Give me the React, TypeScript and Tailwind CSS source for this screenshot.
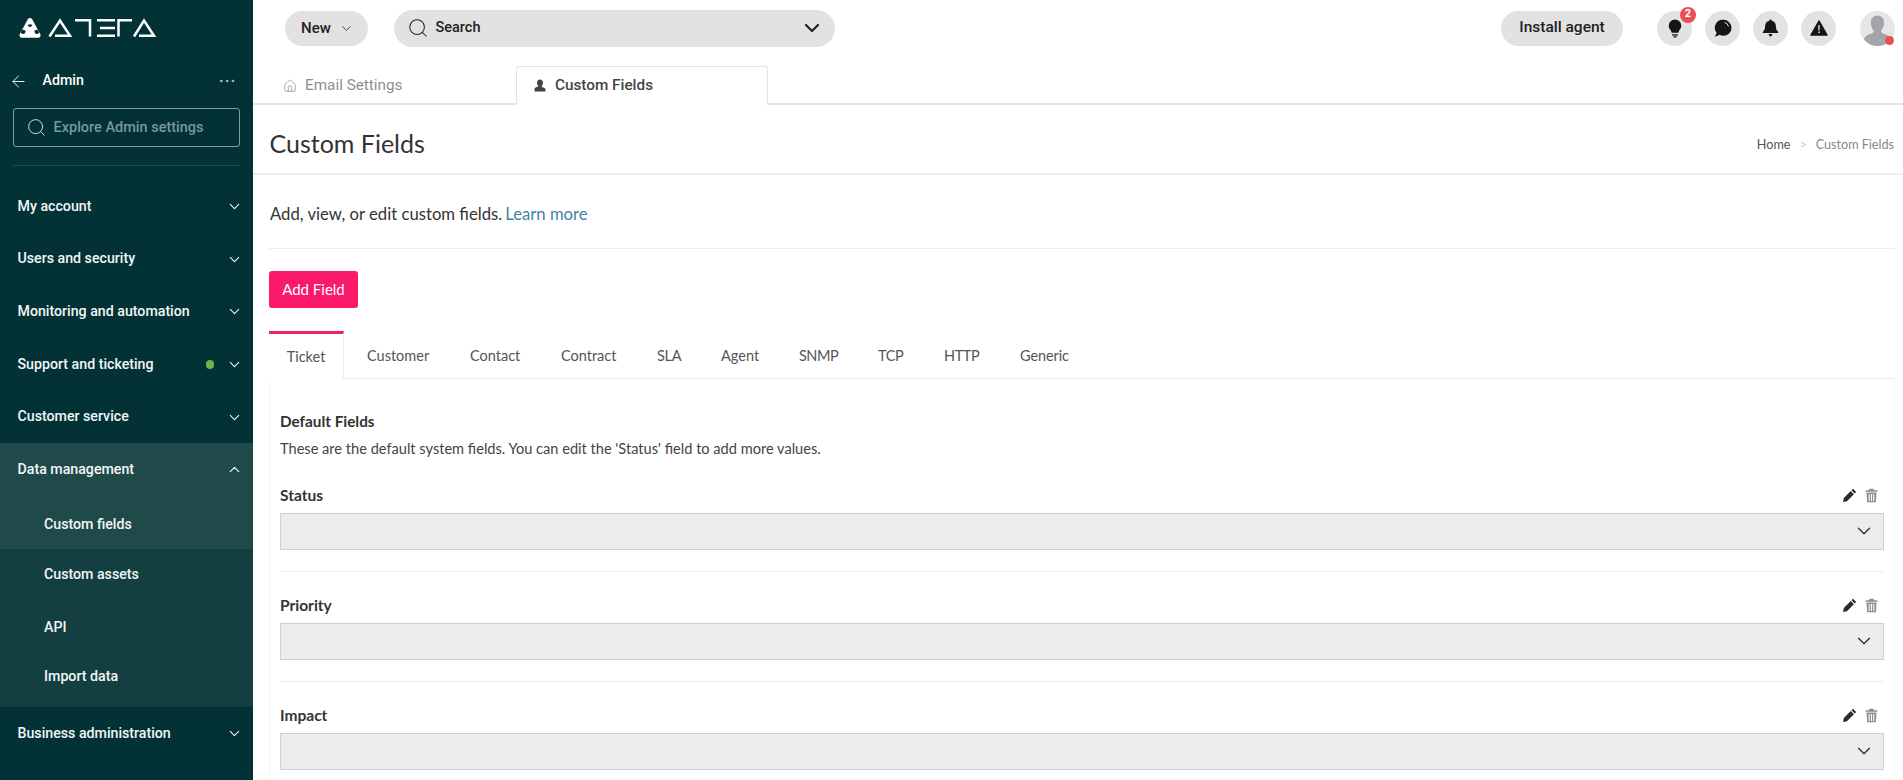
import { ArrowLeft, ChevronDown, ChevronUp, Ellipsis, Home, Search } from "lucide-react";

const sans = "font-['Roboto',sans-serif]";
const body = "font-['Lato','Noto_Sans',sans-serif]";

function Logo() {
  return (
    <svg width="140" height="22" viewBox="0 0 140 22" fill="none" className="shrink-0">
      {/* mark */}
      <path fill="#fff" stroke="#fff" strokeWidth="5" strokeLinejoin="round" d="M12 3.500 20 18.200H4z" />
      <g fill="#033236">
        <path d="M9.800 8c.3 1.200 1.100 2 2.200 2s1.900-.8 2.200-2c-.7-.5-1.400-.8-2.200-.8s-1.500.3-2.200.8z" />
        <path d="M3.800 13.200c1.300-.7 2.900-.3 3.800.7-.1 1.300-.6 2.400-1.700 3.100-1.100 0-2.300-.4-3.200-1.100z" />
        <path d="M20.200 13.200c-1.300-.7-2.900-.3-3.800.7.1 1.300.6 2.400 1.700 3.100 1.100 0 2.300-.4 3.200-1.100z" />
      </g>
      {/* wordmark */}
      <g stroke="#fff" strokeWidth="2.500" strokeLinejoin="miter">
        <path d="M31.500 19.500 42 3.500 52 18.700H37" />
        <path d="M57 3.200h15v16.300" />
        <path d="M79 3.200h18M82 11h15M79 18.700h18" />
        <path d="M114 3.200h-13.500v16.300" />
        <path d="M116 19.500 126 3.500 136 18.700h-15" />
      </g>
    </svg>
  );
}

const navTop = [
  "My account",
  "Users and security",
  "Monitoring and automation",
  "Support and ticketing",
  "Customer service",
];

function NavRow({ label, dot, open }: { label: string; dot?: boolean; open?: boolean }) {
  return (
    <div className="flex h-[52.700px] items-center pl-[17.500px] pr-[10px] text-[14.200px] font-medium text-[#f2f6f6]">
      <span className="flex-1 whitespace-nowrap">{label}</span>
      {dot && <span className="mr-[12px] h-[8.500px] w-[8.500px] rounded-full bg-[#6cb33f]"></span>}
      {open ? <ChevronUp size={17} strokeWidth={1.750} /> : <ChevronDown size={17} strokeWidth={1.500} />}
    </div>
  );
}

function Sidebar() {
  return (
    <aside className={`${sans} flex h-full w-[253px] shrink-0 flex-col bg-[#033236]`}>
      <div className="pl-[18px] pt-[17px]">
        <Logo />
      </div>
      <div className="mt-[30px] flex h-[24px] items-center pl-[9px] pr-[16px] text-white">
        <ArrowLeft size={19} strokeWidth={1.200} />
        <span className="ml-[14.500px] flex-1 text-[14.200px] font-medium">Admin</span>
        <Ellipsis size={20} strokeWidth={1} className="text-[#dbe5e5]" />
      </div>
      <div className="mx-[13px] mt-[15px] flex h-[39px] items-center rounded-[3px] border border-[#7fa0a0] pl-[11.500px] text-[14.500px] font-medium text-[#76999a]">
        <Search size={21} strokeWidth={1.100} className="mr-[7px] text-[#d7e2e2]" />
        Explore Admin settings
      </div>
      <div className="mx-[13px] mt-[18px] h-px bg-[#1f4b4d]"></div>
      <nav className="mt-[14px]">
        {navTop.map((n) => (
          <NavRow key={n} label={n} dot={n === "Support and ticketing"} />
        ))}
        <div className="bg-[#143f40]">
          <div className="bg-[#204a4a]">
            <NavRow label="Data management" open />
            <div className="flex h-[53px] items-center pl-[44px] pt-[5px] text-[14.200px] font-medium text-[#f2f6f6]">Custom fields</div>
          </div>
          <div className="flex h-[52.500px] items-center pb-[2px] pl-[44px] text-[14.200px] font-medium text-[#f2f6f6]">Custom assets</div>
          <div className="flex h-[52.500px] items-center pl-[44px] text-[14.200px] font-medium text-[#f2f6f6]">API</div>
          <div className="flex h-[53px] items-center pb-[7.500px] pl-[44px] text-[14.200px] font-medium text-[#f2f6f6]">Import data</div>
        </div>
        <NavRow label="Business administration" />
      </nav>
    </aside>
  );
}

function Circle({ children, badge }: { children: React.ReactNode; badge?: string }) {
  return (
    <div className="relative flex h-[35px] w-[35px] items-center justify-center rounded-full bg-[#e2e2e2]">
      {children}
      {badge && (
        <span className="absolute -right-[4px] -top-[4px] flex h-4 w-4 items-center justify-center rounded-full bg-[#ea4f55] text-[11px] font-bold text-white">
          {badge}
        </span>
      )}
    </div>
  );
}

function TopBar() {
  return (
    <header className={`${sans} flex h-[56px] items-center pl-[32px] pr-[8px] text-[#222]`}>
      <div className="flex h-[35px] w-[83px] items-center justify-center gap-[8px] rounded-full bg-[#e2e2e2] pl-[2px] text-[15px] font-medium">
        New
        <ChevronDown size={15} strokeWidth={1.300} />
      </div>
      <div className="ml-[26px] flex h-[37px] w-[441px] items-center rounded-full bg-[#e2e2e2] pl-[12.500px] pr-[11px] text-[14.500px] font-medium">
        <Search size={22} strokeWidth={1.100} className="mr-[7px]" />
        <span className="flex-1">Search</span>
        <ChevronDown size={24} strokeWidth={2.200} />
      </div>
      <div className="ml-auto flex h-[35px] w-[122px] items-center justify-center rounded-full bg-[#e2e2e2] text-[15.500px] font-medium">
        Install agent
      </div>
      <div className="ml-[34px] flex items-center gap-[13px]">
        <Circle badge="2">
          <svg width="14" height="19" viewBox="0 0 14 19" fill="#151515">
            <path d="M7 .5a6.300 6.300 0 0 0-6.300 6.300c0 2.500 1.700 3.800 2.500 5.600.2.500.4.900.5 1.400h6.600c.1-.5.300-.9.500-1.400.8-1.800 2.500-3.100 2.500-5.600A6.300 6.300 0 0 0 7 .5zM4 15.200h6v1.300H4zM5 17.200h4l-.8 1.300H5.800z" />
          </svg>
        </Circle>
        <Circle>
          <svg width="18" height="18" viewBox="0 0 18 18">
            <path fill="#151515" d="M9.500.8a8 8 0 0 1 0 16c-1.500 0-2.800-.4-4-1.100-1 .9-2.600 1.600-4.900 1.500 1-1 1.800-2.100 1.900-3.500A8 8 0 0 1 9.500.8z" />
            <path fill="none" stroke="#e2e2e2" strokeWidth="1" d="M10.500 3.700c2 .2 3.600 1.800 3.800 3.800" />
          </svg>
        </Circle>
        <Circle>
          <svg width="17" height="18" viewBox="0 0 17 18" fill="#151515">
            <path d="M8.500 .6c.7 0 1.200.5 1.200 1.100 2.700.5 4.200 2.700 4.200 5.400 0 3 .7 4.300 2.300 5.900.3.400.1 1-.5 1H1.300c-.6 0-.8-.6-.5-1C2.400 11.400 3.100 10.100 3.100 7.100c0-2.700 1.500-4.900 4.200-5.400 0-.6.500-1.100 1.200-1.100zM6.500 15h4l-.8 1.800a1.300 1.300 0 0 1-2.400 0z" />
          </svg>
        </Circle>
        <Circle>
          <svg width="18" height="16" viewBox="0 0 18 16">
            <path fill="#151515" stroke="#151515" strokeWidth="1.500" strokeLinejoin="round" d="M9 1 17 15H1z" />
            <path fill="#e2e2e2" d="M8.200 5.200h1.600l-.2 5.300H8.400zM8.200 11.500h1.600v1.600H8.200z" />
          </svg>
        </Circle>
        <div className="relative ml-[11px] h-[35px] w-[35px] rounded-full bg-[#e6e6e6]">
          <svg width="35" height="35" viewBox="0 0 35 35" fill="#a3a5a8" className="rounded-full">
            <path d="M17.500 4.500c4.100 0 6.500 3 6.500 7.300 0 3.700-1.400 6.400-3 8 .1 1.600 1 2.400 3.500 3.300 3 1.100 5 1.900 6.300 4.900l1 7H3l1-7c1.300-3 3.300-3.800 6.300-4.900 2.500-.9 3.400-1.700 3.500-3.300-1.600-1.600-3-4.300-3-8 0-4.300 2.500-7.300 6.700-7.300z" />
          </svg>
          <span className="absolute bottom-[1px] right-[1.500px] h-[9px] w-[9px] rounded-full bg-[#ea4f55]"></span>
        </div>
      </div>
    </header>
  );
}

function FieldRow({ label }: { label: string }) {
  return (
    <div className="pb-[24px]">
      <div className="flex h-[20px] items-center justify-between pr-[6px]">
        <span className="text-[15.500px] font-bold text-[#333]">{label}</span>
        <div className="flex items-center gap-[8.500px]">
          <svg width="15" height="15" viewBox="0 0 14 14" fill="#2b2b2b">
            <path d="M10.300.8 13.200 3.700 11.800 5.100 8.900 2.200zM8.200 2.900 11.100 5.800 4.600 12.300 1 13l.7-3.600z" />
          </svg>
          <svg width="13" height="15" viewBox="0 0 12 14" fill="#8f8f8f">
            <path d="M4.200 .8h3.600l.7 1.400h3v1.300H.5V2.200h3zM1.300 4.300h9.400l-.6 9H1.900zM3.400 5.500v6.700h1V5.500zM5.500 5.500v6.700h1V5.500zM7.600 5.500v6.700h1V5.500z" />
          </svg>
        </div>
      </div>
      <div className="mt-[7px] flex h-[37px] items-center justify-end border border-[#cfcfd3] bg-[#ededed] pr-[8px] text-[#333]">
        <ChevronDown size={22} strokeWidth={1.500} />
      </div>
      <div className="mt-[21px] h-px bg-[#ececec]"></div>
    </div>
  );
}

const tabs = [
  { label: "Customer", cls: "w-[103px]" },
  { label: "Contact", cls: "w-[91px]" },
  { label: "Contract", cls: "w-[96px]" },
  { label: "SLA", cls: "w-[64px] tracking-[-0.3px]" },
  { label: "Agent", cls: "w-[78px]" },
  { label: "SNMP", cls: "w-[79px] tracking-[-0.5px]" },
  { label: "TCP", cls: "w-[66px] tracking-[-0.4px]" },
  { label: "HTTP", cls: "w-[76px] tracking-[-0.4px]" },
  { label: "Generic", cls: "w-[60px] tracking-[-0.1px]" },
];

function Content() {
  return (
    <main className={`${body} min-h-0 flex-1 overflow-hidden`}>
      <div className={`${sans} flex h-[49px] items-end border-b-2 border-[#e4e4e6] pl-[18px]`}>
        <div className="flex h-[47px] w-[245px] items-center gap-[8px] pl-[12px] pt-[12px] text-[15.300px] text-[#8f8f8f]">
          <Home size={14} strokeWidth={1.250} />
          Email Settings
        </div>
        <div className="-mb-[2px] flex h-[39px] w-[252px] items-center gap-[9px] rounded-t-[3px] border border-b-0 border-[#e4e4e6] bg-white pb-[1.500px] pl-[17px] text-[15.300px] font-medium text-[#444]">
          <svg width="12" height="13" viewBox="0 0 12 13" fill="#444">
            <path d="M6 .5c1.900 0 3 1.300 3 3.200 0 1.400-.6 2.700-1.300 3.400 0 .8.500 1.100 1.600 1.500 1.300.5 2.200.9 2.200 2.400v1.500H.5V10.500c0-1.500.9-1.900 2.200-2.400 1.100-.4 1.600-.7 1.600-1.500C3.600 6.400 3 5.100 3 3.700 3 1.800 4.100.5 6 .5z" />
          </svg>
          Custom Fields
        </div>
      </div>

      <div className="flex h-[70px] items-center justify-between border-b-2 border-[#eeeeee] pl-[16.500px] pr-[9px] pt-[9px]">
        <h1 className="text-[25px] text-[#333]">Custom Fields</h1>
        <div className="pt-[4px] text-[12.600px] text-[#888]">
          <span className="text-[#555]">Home</span>
          <span className="mx-[9px] text-[#c8c8c8]">&gt;</span>
          Custom Fields
        </div>
      </div>

      <div className="pl-[16px] pr-[8px]">
        <div className="flex h-[73.500px] items-center border-b border-[#ececec] pl-[1px] pt-[6px] text-[16.700px] text-[#333]">
          Add, view, or edit custom fields.
          <a className="ml-[3px] text-[#3f83a8]">Learn more</a>
        </div>
        <button className="mt-[22px] flex h-[37px] w-[89px] items-center justify-center rounded-[3px] bg-[#fa1a6b] text-[15px] text-white">
          Add Field
        </button>

        <div className="mt-[23px] flex h-[48px] border-b border-[#ececec] text-[14.500px] text-[#555]">
          <div className="-mb-px flex w-[75px] items-center justify-center border-r border-t-[3px] border-[#ececec] border-t-[#e6246c] bg-white pt-[1px]">
            Ticket
          </div>
          <div className="flex items-center pl-[23px] pt-[4px]">
            {tabs.map((t) => (
              <span key={t.label} className={t.cls}>
                {t.label}
              </span>
            ))}
          </div>
        </div>

        <div className="border-x border-[#f5f5f5] pl-[10px] pt-[32px]">
          <div className="text-[15.300px] font-bold leading-[20px] text-[#333]">Default Fields</div>
          <div className="mt-[8px] text-[14.600px] leading-[20px] text-[#444]">
            These are the default system fields. You can edit the 'Status' field to add more values.
          </div>
          <div className="mt-[27px] pr-[10px]">
            <FieldRow label="Status" />
            <FieldRow label="Priority" />
            <FieldRow label="Impact" />
          </div>
        </div>
      </div>
    </main>
  );
}

export default function App() {
  return (
    <div className="flex h-[780px] w-full overflow-hidden bg-white">
      <Sidebar />
      <div className="flex min-w-0 flex-1 flex-col">
        <TopBar />
        <Content />
      </div>
    </div>
  );
}
